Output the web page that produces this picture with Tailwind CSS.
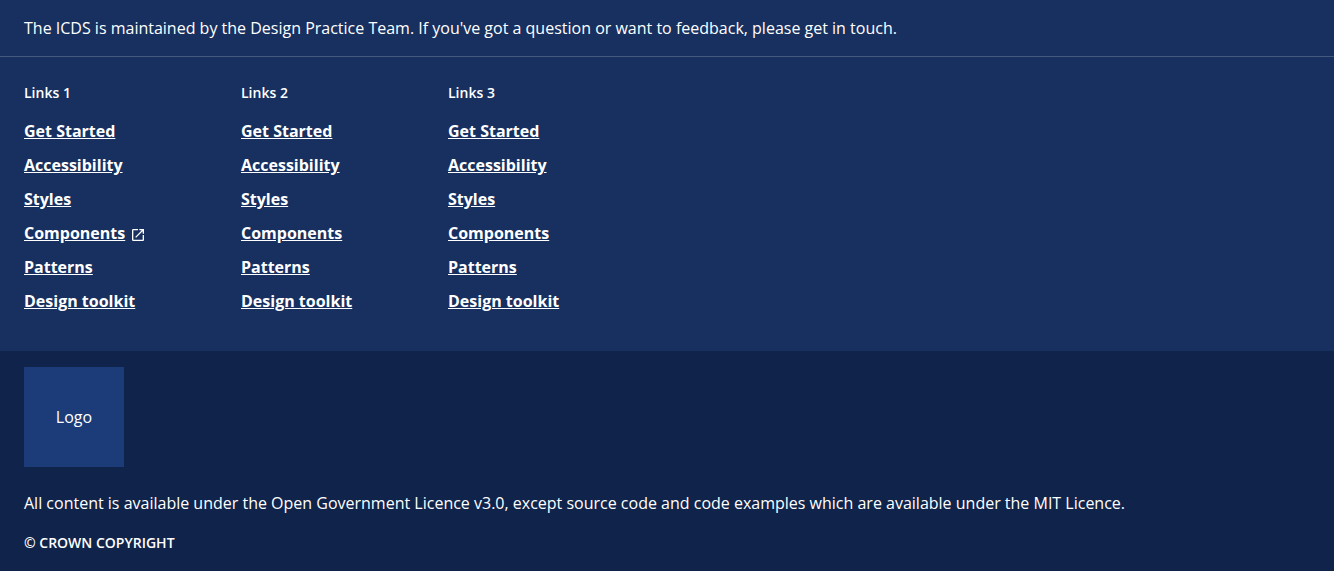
<!DOCTYPE html>
<html lang="en">
<head>
<meta charset="utf-8">
<meta name="viewport" content="width=device-width, initial-scale=1">
<title>ICDS footer</title>
<script src="https://cdn.jsdelivr.net/npm/@tailwindcss/browser@4"></script>
</head>
<body class="bg-white font-['Open_Sans',sans-serif] text-base text-white">
<footer class="bg-[#17305f]">
  <div class="border-b border-[#45597f] px-6 py-4">
    <p class="leading-6">The ICDS is maintained by the Design Practice Team. If you've got a question or want to feedback, please get in touch.</p>
  </div>
  <nav aria-label="Footer" class="flex flex-wrap px-6 pt-6 pb-8">
    <section class="w-[217px]">
      <h2 class="text-sm leading-6 font-semibold">Links 1</h2>
      <ul class="grid gap-[10px] pt-[14px] pb-[6px] leading-6 font-bold">
        <li><a href="#" class="underline">Get Started</a></li>
        <li><a href="#" class="underline">Accessibility</a></li>
        <li><a href="#" class="underline">Styles</a></li>
        <li><a href="#" class="flex items-center gap-[5px]"><span class="underline">Components</span><svg class="mt-1 size-4" viewBox="0 0 24 24" fill="currentColor" role="img" aria-label="Opens in a new tab"><path d="M19 19H5V5h7V3H5a2 2 0 0 0-2 2v14a2 2 0 0 0 2 2h14c1.100 0 2-.9 2-2v-7h-2v7zM14 3v2h3.590l-9.830 9.830 1.410 1.410L19 6.410V10h2V3h-7z"/></svg></a></li>
        <li><a href="#" class="underline">Patterns</a></li>
        <li><a href="#" class="underline">Design toolkit</a></li>
      </ul>
    </section>
    <section class="w-[207px]">
      <h2 class="text-sm leading-6 font-semibold">Links 2</h2>
      <ul class="grid gap-[10px] pt-[14px] pb-[6px] leading-6 font-bold">
        <li><a href="#" class="underline">Get Started</a></li>
        <li><a href="#" class="underline">Accessibility</a></li>
        <li><a href="#" class="underline">Styles</a></li>
        <li><a href="#" class="underline">Components</a></li>
        <li><a href="#" class="underline">Patterns</a></li>
        <li><a href="#" class="underline">Design toolkit</a></li>
      </ul>
    </section>
    <section class="w-[207px]">
      <h2 class="text-sm leading-6 font-semibold">Links 3</h2>
      <ul class="grid gap-[10px] pt-[14px] pb-[6px] leading-6 font-bold">
        <li><a href="#" class="underline">Get Started</a></li>
        <li><a href="#" class="underline">Accessibility</a></li>
        <li><a href="#" class="underline">Styles</a></li>
        <li><a href="#" class="underline">Components</a></li>
        <li><a href="#" class="underline">Patterns</a></li>
        <li><a href="#" class="underline">Design toolkit</a></li>
      </ul>
    </section>
  </nav>
  <div class="bg-[#10234a] px-6 pt-4 pb-4">
    <div class="grid size-[100px] place-items-center bg-[#1b3b79]">Logo</div>
    <p class="pt-6 leading-6">All content is available under the Open Government Licence v3.0, except source code and code examples which are available under the MIT Licence.</p>
    <p class="pt-4 text-sm leading-6 font-semibold">© CROWN COPYRIGHT</p>
  </div>
</footer>
</body>
</html>
